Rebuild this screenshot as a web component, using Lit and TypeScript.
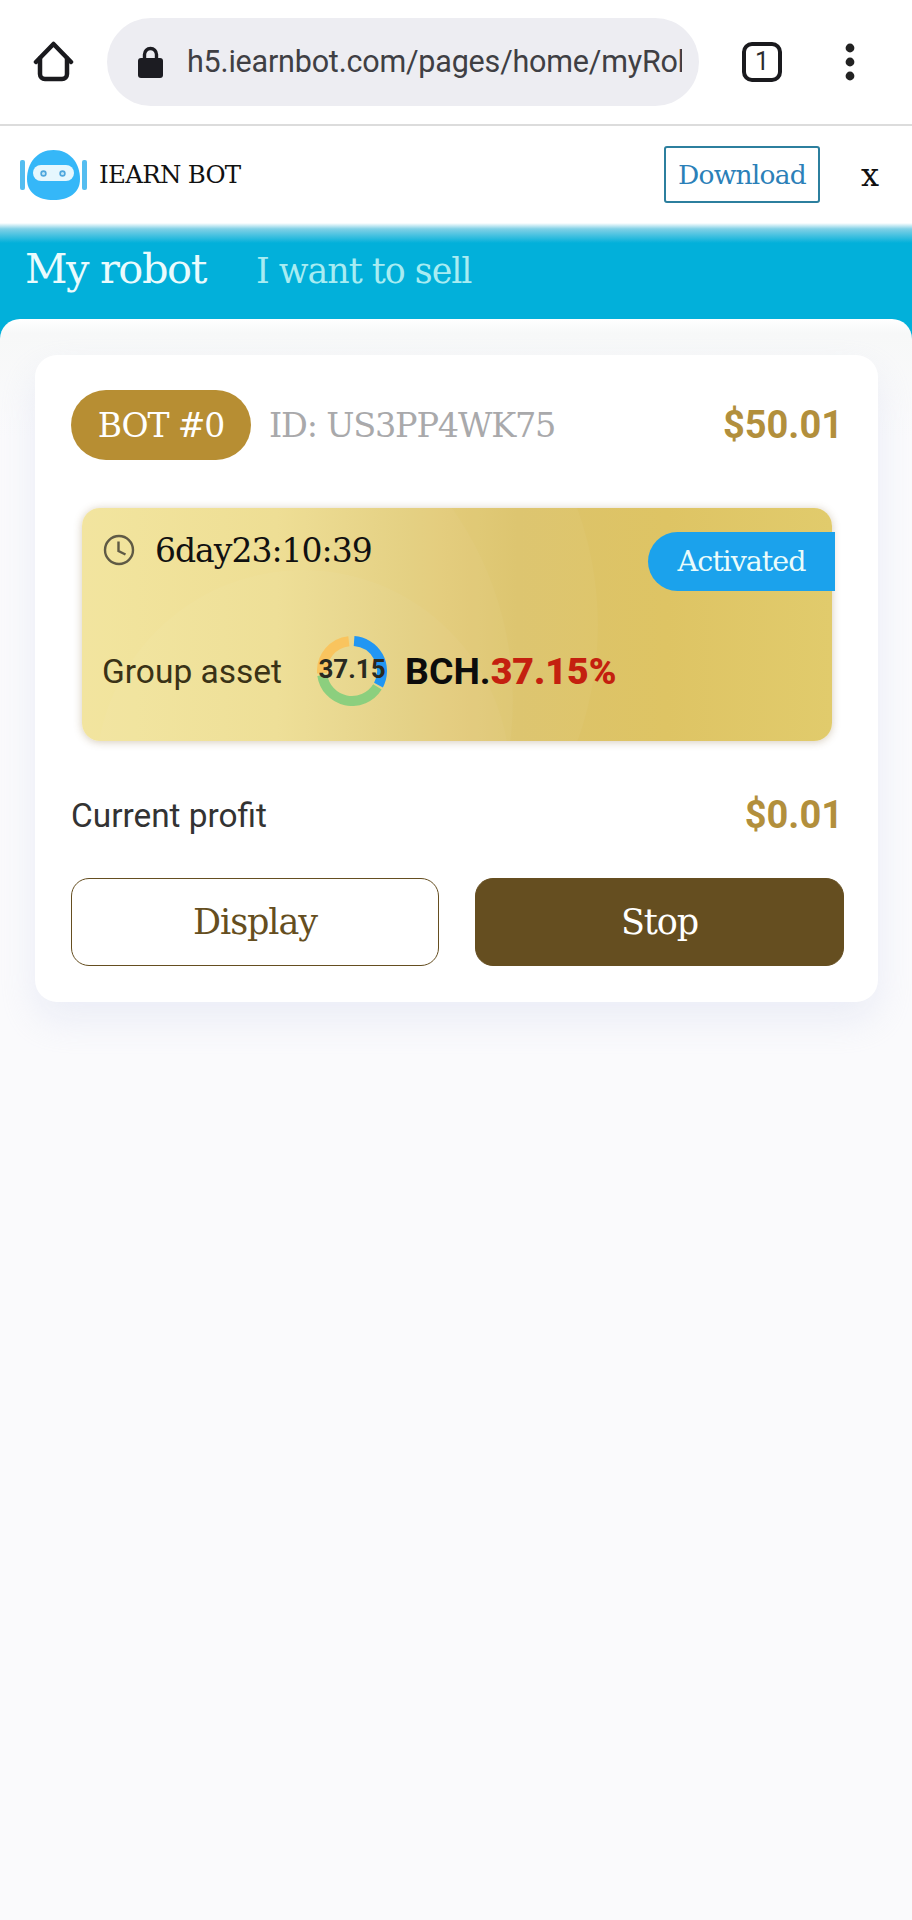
import { LitElement, html, css, svg } from "lit";
import { customElement } from "lit/decorators.js";

// donut segments: [start deg, end deg, colour], clockwise from 12 o'clock
const SEGMENTS: [number, number, string][] = [
  [4, 118, "#2196f3"],
  [122, 262, "#8ccf7e"],
  [266, 354, "#f9c45e"],
];

function arcPath(start: number, end: number, r: number): string {
  const pt = (deg: number) => {
    const a = ((deg - 90) * Math.PI) / 180;
    return `${(35 + r * Math.cos(a)).toFixed(2)} ${(35 + r * Math.sin(a)).toFixed(2)}`;
  };
  const large = end - start > 180 ? 1 : 0;
  return `M${pt(start)} A${r} ${r} 0 ${large} 1 ${pt(end)}`;
}

@customElement("app-root")
export class AppRoot extends LitElement {
  static styles = css`
    :host {
      display: block;
      width: 912px;
      height: 1920px;
      overflow: hidden;
      background: #fafafc;
      font-family: "Roboto", sans-serif;
      --serif: "DejaVu Serif", "Liberation Serif", serif;
    }
    .chrome {
      height: 126px;
      box-sizing: border-box;
      background: #fff;
      border-bottom: 2px solid #dcdcdc;
      display: flex;
      align-items: center;
      padding: 0 0 1px 33px;
    }
    .chrome svg {
      flex: none;
      display: block;
    }
    .url {
      width: 592px;
      height: 88px;
      margin-left: 32px;
      box-sizing: border-box;
      padding: 0 17px 0 31px;
      background: #ededf2;
      border-radius: 44px;
      display: flex;
      align-items: center;
      gap: 24px;
      overflow: hidden;
    }
    .url span {
      font-size: 30.5px;
      color: #3f3f44;
      white-space: nowrap;
      overflow: hidden;
      flex: 1;
      letter-spacing: -0.2px;
    }
    .tabs {
      width: 40px;
      height: 40px;
      box-sizing: border-box;
      flex: none;
      margin-left: 43px;
      border: 4.5px solid #1a1a1e;
      border-radius: 10px;
      display: flex;
      align-items: center;
      justify-content: center;
      font-size: 25px;
      line-height: 1;
      color: #2a2a2e;
    }
    .dots {
      margin-left: 62px;
    }
    .banner {
      height: 97px;
      box-sizing: border-box;
      background: #fff;
      display: flex;
      align-items: center;
      padding: 0 33px 0 20px;
      font-family: var(--serif);
    }
    .brand {
      font-size: 24.5px;
      color: #111;
      margin-left: 11px;
      flex: 1;
      letter-spacing: -0.7px;
    }
    .download {
      width: 156px;
      height: 57px;
      box-sizing: border-box;
      border: 2px solid #2c7f9e;
      border-radius: 3px;
      color: #2b80b8;
      font-size: 26.5px;
      letter-spacing: -0.8px;
      display: flex;
      align-items: center;
      justify-content: center;
    }
    .close {
      font-size: 32px;
      color: #111;
      margin-left: 41px;
      line-height: 1;
    }
    .tabbar {
      height: 116px;
      box-sizing: border-box;
      background: linear-gradient(#ffffff 0, #7fd0e6 6px, #02b0da 20px, #02b0da 100%);
      display: flex;
      align-items: baseline;
      padding: 21px 0 0 25px;
      font-family: var(--serif);
      color: #fff;
    }
    .tabbar .active {
      font-size: 41.5px;
      letter-spacing: -1.4px;
      color: #eafbfd;
    }
    .tabbar .other {
      font-size: 34.8px;
      letter-spacing: -1px;
      color: #a8ecf2;
      margin-left: 50px;
    }
    .sheet {
      position: relative;
      margin-top: -20px;
      background: linear-gradient(#ffffff 0, #f7f8f8 14px, #fafafc 120px);
      border-radius: 20px 20px 0 0;
      padding: 36px 34px 0 35px;
      height: 1600px;
      box-sizing: border-box;
    }
    .card {
      background: #fff;
      border-radius: 22px;
      padding: 35px 35px 36px 36px;
      box-shadow: 0 18px 36px rgba(205, 212, 235, 0.32);
    }
    .head {
      display: flex;
      align-items: center;
      font-family: var(--serif);
    }
    .pill {
      width: 180px;
      height: 70px;
      background: #b78e33;
      border-radius: 35px;
      color: #fff;
      font-size: 33px;
      letter-spacing: -1.1px;
      display: flex;
      align-items: center;
      justify-content: center;
    }
    .id {
      flex: 1;
      margin-left: 18px;
      font-size: 33.5px;
      letter-spacing: -1.2px;
      color: #a9a9ab;
    }
    .amount {
      font-family: "Roboto", sans-serif;
      font-weight: 700;
      color: #b28f3c;
    }
    .head .amount {
      font-size: 38px;
    }
    .gold {
      position: relative;
      margin: 48px 11px 0;
      height: 233px;
      border-radius: 18px;
      background: linear-gradient(90deg, #f2e399 0%, #eedc8e 26%, #dcc36b 58%, #dec464 78%, #e1cb6c 100%);
      box-shadow: 0 1px 8px rgba(120, 90, 40, 0.32);
    }
    .glow {
      position: absolute;
      inset: 0;
      border-radius: 18px;
      overflow: hidden;
    }
    .glow i {
      position: absolute;
      border-radius: 50%;
      background: rgba(255, 255, 255, 0.035);
    }
    .glow .c1 {
      left: 14px;
      top: 62px;
      width: 414px;
      height: 414px;
    }
    .glow .c2 {
      left: -164px;
      top: -223px;
      width: 680px;
      height: 680px;
    }
    .glow .c3 {
      left: -235px;
      top: -141px;
      width: 666px;
      height: 666px;
    }
    .timer {
      position: relative;
      height: 98px;
      box-sizing: border-box;
      display: flex;
      align-items: center;
      padding: 0 0 14px 21px;
      font-family: var(--serif);
      font-size: 33px;
      letter-spacing: -1px;
      color: #111;
    }
    .timer svg {
      margin-right: 20px;
    }
    .status {
      position: absolute;
      right: -3px;
      top: 24px;
      width: 187px;
      height: 59px;
      background: #1ba2ec;
      border-radius: 30px 0 0 30px;
      color: #eafcfb;
      font-family: var(--serif);
      font-size: 28.5px;
      letter-spacing: -1px;
      display: flex;
      align-items: center;
      justify-content: center;
      box-sizing: border-box;
    }
    .asset {
      position: relative;
      display: flex;
      align-items: center;
      padding: 30px 0 0 20px;
      font-size: 33.5px;
      color: #3a3216;
    }
    .donut {
      position: relative;
      width: 70px;
      height: 70px;
      margin-left: 35px;
      flex: none;
    }
    .donut span {
      position: absolute;
      inset: 0;
      display: flex;
      align-items: center;
      justify-content: center;
      font-size: 26px;
      font-weight: 700;
      color: #2a2a20;
      padding-bottom: 4px;
      box-sizing: border-box;
    }
    .rate {
      margin-left: 18px;
      font-size: 37.4px;
      font-weight: 700;
      color: #0c0c0c;
    }
    .rate b {
      color: #c4200f;
    }
    .profit {
      display: flex;
      justify-content: space-between;
      align-items: center;
      margin-top: 52px;
      font-size: 33.4px;
      color: #333;
    }
    .profit .amount {
      font-size: 38px;
    }
    .actions {
      display: grid;
      grid-template-columns: 368px 369px;
      gap: 36px;
      margin-top: 41px;
    }
    .btn {
      height: 88px;
      box-sizing: border-box;
      border-radius: 18px;
      border: 1.5px solid #654e20;
      font-family: var(--serif);
      font-size: 35px;
      letter-spacing: -1.1px;
      display: flex;
      align-items: center;
      justify-content: center;
      color: #654e20;
      background: #fff;
    }
    .btn.solid {
      background: #654e20;
      color: #fff;
    }
    .logo {
      flex: none;
    }
  `;

  private _logo() {
    return html`<svg class="logo" width="68" height="54" viewBox="0 0 68 54">
      <rect x="0" y="12" width="5" height="30" rx="2" fill="#55bdf0"></rect>
      <rect x="62" y="12" width="5" height="30" rx="2" fill="#55bdf0"></rect>
      <path d="M33.5 2C17 2 7 15 7 31c0 14 11 21 26.5 21S60 45 60 31C60 15 50 2 33.5 2z" fill="#35b7f8"></path>
      <rect x="13" y="17" width="41" height="16" rx="8" fill="#e6f7fe"></rect>
      <circle cx="23.5" cy="25.5" r="2.4" fill="#bfe6f8" stroke="#4fa6dc" stroke-width="1.6"></circle>
      <circle cx="42.5" cy="25.5" r="2.4" fill="#bfe6f8" stroke="#4fa6dc" stroke-width="1.6"></circle>
    </svg>`;
  }

  protected render() {
    return html`
      <div class="chrome">
        <svg width="42" height="42" viewBox="0 0 42 42" fill="none" stroke="#1a1a1e" stroke-width="4.5" stroke-linejoin="round" stroke-linecap="round">
          <path d="M3 21 20.5 3 38 21"></path>
          <path d="M7 17.5V33a5 5 0 0 0 5 5H29a5 5 0 0 0 5-5V17.5"></path>
        </svg>
        <div class="url">
          <svg width="25" height="32" viewBox="0 0 25 32">
            <path d="M6.5 13V8.5a6 6 0 0 1 12 0V13" fill="none" stroke="#1c1c22" stroke-width="3.4"></path>
            <rect x="0" y="12" width="25" height="20" rx="3" fill="#1c1c22"></rect>
          </svg>
          <span>h5.iearnbot.com/pages/home/myRobot</span>
        </div>
        <div class="tabs">1</div>
        <svg class="dots" width="12" height="38" viewBox="0 0 12 38" fill="#222">
          <circle cx="6" cy="5" r="4.4"></circle>
          <circle cx="6" cy="19" r="4.4"></circle>
          <circle cx="6" cy="33" r="4.4"></circle>
        </svg>
      </div>
      <div class="banner">
        ${this._logo()}
        <span class="brand">IEARN BOT</span>
        <span class="download">Download</span>
        <span class="close">x</span>
      </div>
      <div class="tabbar">
        <span class="active">My robot</span>
        <span class="other">I want to sell</span>
      </div>
      <div class="sheet">
        <div class="card">
          <div class="head">
            <span class="pill">BOT #0</span>
            <span class="id">ID: US3PP4WK75</span>
            <span class="amount">$50.01</span>
          </div>
          <div class="gold">
            <div class="glow"><i class="c1"></i><i class="c2"></i><i class="c3"></i></div>
            <div class="timer">
              <svg width="32" height="32" viewBox="0 0 32 32" fill="none" stroke="#5f5a45" stroke-width="2.4">
                <circle cx="16" cy="16" r="14"></circle>
                <path d="M15.5 7.5V17l7 3.5"></path>
              </svg>
              6day23:10:39
            </div>
            <span class="status">Activated</span>
            <div class="asset">
              Group asset
              <div class="donut">
                <svg width="70" height="70" viewBox="0 0 70 70" fill="none" stroke-width="10">
                  ${SEGMENTS.map(([a, b, c]) => svg`<path d=${arcPath(a, b, 30)} stroke=${c}></path>`)}
                </svg>
                <span>37.15</span>
              </div>
              <span class="rate">BCH.<b>37.15%</b></span>
            </div>
          </div>
          <div class="profit">
            <span>Current profit</span>
            <span class="amount">$0.01</span>
          </div>
          <div class="actions">
            <div class="btn">Display</div>
            <div class="btn solid">Stop</div>
          </div>
        </div>
      </div>
    `;
  }
}
